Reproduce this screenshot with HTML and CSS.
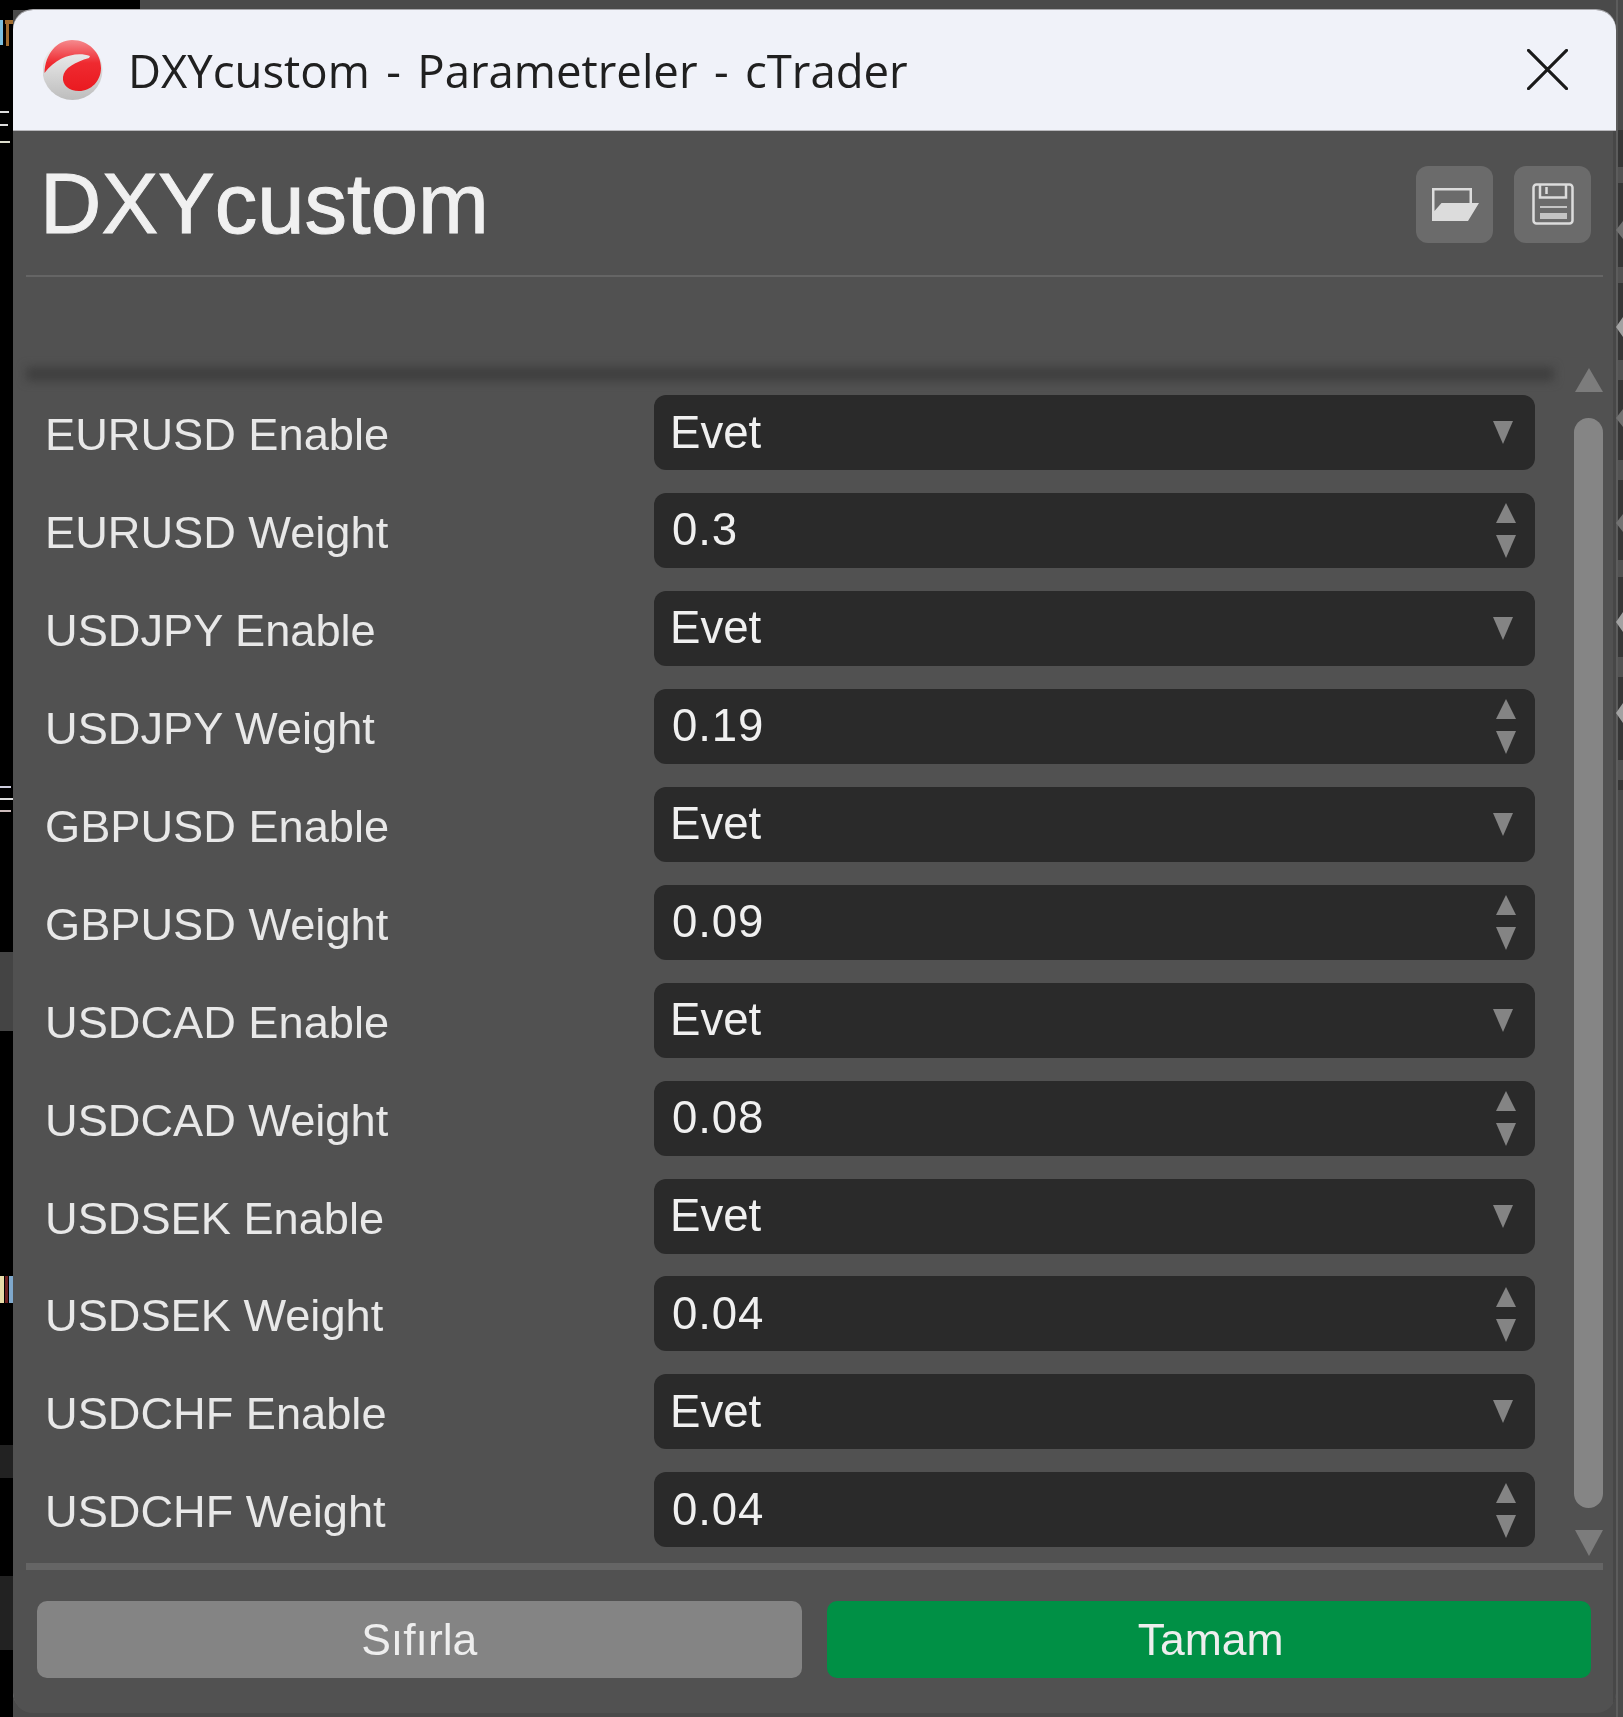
FILE: index.html
```html
<!DOCTYPE html>
<html lang="tr">
<head>
<meta charset="utf-8">
<title>DXYcustom - Parametreler - cTrader</title>
<link rel="stylesheet" href="styles.css">
</head>
<body>
<div class="desktop">
  <svg class="strip strip-left" width="13" height="1717" viewBox="0 0 13 1717" aria-hidden="true">
    <rect x="0" y="952" width="13" height="79" fill="#444"/>
    <rect x="0" y="1445" width="13" height="33" fill="#222"/>
    <rect x="0" y="1576" width="13" height="74" fill="#222"/>
    <rect x="0" y="20" width="3" height="25" fill="#7cc0e0"/>
    <path d="M5 20h8v4H9v22H6V24H5Z" fill="#a06c30"/>
    <rect x="0" y="111" width="9" height="2" fill="#ddd"/>
    <rect x="0" y="124" width="8" height="2" fill="#ddd"/>
    <rect x="0" y="141" width="10" height="2" fill="#ddc"/>
    <rect x="0" y="786" width="11" height="2" fill="#ccd"/>
    <rect x="0" y="798" width="13" height="2" fill="#ddd"/>
    <rect x="0" y="810" width="11" height="2" fill="#cbb"/>
    <rect x="0" y="1276" width="4" height="27" fill="#e8dca8"/>
    <rect x="5" y="1276" width="3" height="27" fill="#6c2020"/>
    <rect x="9" y="1276" width="4" height="27" fill="#7fa8cc"/>
  </svg>
  <svg class="strip strip-right" width="7" height="665" viewBox="0 0 7 665" aria-hidden="true">
    <rect x="2" y="5" width="5" height="660" fill="#363636"/>
    <path d="M2 42h5v16H2ZM2 142h5v16H2ZM2 235h5v20H2ZM2 335h5v20H2ZM2 435h5v17H2ZM2 532h5v20H2ZM2 635h5v20H2Z" fill="#525252"/>
    <path d="M0 105l7-9v18ZM0 398l7-9v18ZM0 293l7-9v18Z" fill="#727272"/>
    <path d="M0 202l7-10v20ZM0 497l7-10v20ZM0 588l7-10v20Z" fill="#a2a2a2"/>
  </svg>
  <main class="window">
    <header class="titlebar">
      <svg class="app-logo" viewBox="0 0 60 62" aria-hidden="true">
        <defs>
          <linearGradient id="lg-g" x1="0" y1="0" x2="0" y2="1"><stop offset="0" stop-color="#f6f6f6"/><stop offset="1" stop-color="#bdbdbd"/></linearGradient>
          <linearGradient id="lg-r" x1="0" y1="0" x2="0" y2="1"><stop offset="0" stop-color="#f58a8e"/><stop offset="0.45" stop-color="#ef2a30"/><stop offset="1" stop-color="#ea1a20"/></linearGradient>
        </defs>
        <circle cx="29.500" cy="31" r="30" fill="url(#lg-g)"/>
        <path d="M1.500 34C2 15 14 1 29 1c17 0 29 13 29 28 0 13-10 23-22 23-10 0-17-6-16-14 1-9 12-15 26-19l1-2C34 12 14 17 1.500 34Z" fill="url(#lg-r)"/>
      </svg>
      <span class="title-text">DXYcustom - Parametreler - cTrader</span>
      <svg class="close-x" viewBox="0 0 42 42" aria-hidden="true"><path d="M1.500 1.500l39 39M40.500 1.500l-39 39"/></svg>
    </header>
    <section class="body">
      <div class="heading-row">
        <h1 class="heading">DXYcustom</h1>
        <div class="tools">
          <button class="tool" aria-label="Aç">
            <svg class="ic-folder" viewBox="0 0 47 33" width="47" height="33" aria-hidden="true"><path class="ic-fill" d="M0 0h40v15h-2.500V2.500h-35V23l7-8h37.500L36 33H0Z"/></svg>
          </button>
          <button class="tool" aria-label="Kaydet">
            <svg viewBox="0 0 42 42" width="42" height="42" aria-hidden="true"><rect class="ic-line" x="1.500" y="1.500" width="39" height="39" rx="3"/><path class="ic-line" d="M8 2v12.500h26V2"/><path class="ic-line" d="M14.500 4v7"/><path class="ic-bar" d="M8 23h27v2H8zM8 30h27v6H8z"/></svg>
          </button>
        </div>
      </div>
      <div class="spacer"></div>
      <div class="scroll-wrap">
        <div class="rows">
          <div class="shadow"></div>
          <div class="row"><span class="label">EURUSD Enable</span><div class="field"><span class="val">Evet</span><i class="tri down one"></i></div></div>
          <div class="row"><span class="label">EURUSD Weight</span><div class="field"><span class="val num">0.3</span><span class="spin"><i class="tri up"></i><i class="tri down"></i></span></div></div>
          <div class="row"><span class="label">USDJPY Enable</span><div class="field"><span class="val">Evet</span><i class="tri down one"></i></div></div>
          <div class="row"><span class="label">USDJPY Weight</span><div class="field"><span class="val num">0.19</span><span class="spin"><i class="tri up"></i><i class="tri down"></i></span></div></div>
          <div class="row"><span class="label">GBPUSD Enable</span><div class="field"><span class="val">Evet</span><i class="tri down one"></i></div></div>
          <div class="row"><span class="label">GBPUSD Weight</span><div class="field"><span class="val num">0.09</span><span class="spin"><i class="tri up"></i><i class="tri down"></i></span></div></div>
          <div class="row"><span class="label">USDCAD Enable</span><div class="field"><span class="val">Evet</span><i class="tri down one"></i></div></div>
          <div class="row"><span class="label">USDCAD Weight</span><div class="field"><span class="val num">0.08</span><span class="spin"><i class="tri up"></i><i class="tri down"></i></span></div></div>
          <div class="row"><span class="label">USDSEK Enable</span><div class="field"><span class="val">Evet</span><i class="tri down one"></i></div></div>
          <div class="row"><span class="label">USDSEK Weight</span><div class="field"><span class="val num">0.04</span><span class="spin"><i class="tri up"></i><i class="tri down"></i></span></div></div>
          <div class="row"><span class="label">USDCHF Enable</span><div class="field"><span class="val">Evet</span><i class="tri down one"></i></div></div>
          <div class="row"><span class="label">USDCHF Weight</span><div class="field"><span class="val num">0.04</span><span class="spin"><i class="tri up"></i><i class="tri down"></i></span></div></div>
        </div>
        <div class="scrollbar">
          <i class="sb-arrow sb-up"></i>
          <div class="sb-thumb"></div>
          <i class="sb-arrow sb-down"></i>
        </div>
      </div>
      <div class="footer">
        <button class="btn reset">Sıfırla</button>
        <button class="btn ok">Tamam</button>
      </div>
    </section>
  </main>
</div>
</body>
</html>
```
FILE: styles.css
```css
* { box-sizing: border-box; }
html, body { margin: 0; padding: 0; }
body { width: 1623px; height: 1717px; overflow: hidden; background: #000; font-family: "Liberation Sans", Arial, sans-serif; }
.desktop {
  position: relative; width: 1623px; height: 1717px; padding: 10px 7px 4px 13px;
  background:
    linear-gradient(90deg, #000 0 140px, transparent 140px) 0 0 / 100% 10px no-repeat,
    linear-gradient(90deg, #000 0 13px, #4a4a4a 13px 1616px, #5c5c5c 1616px 1618px, #4a4a4a 1618px);
  filter: blur(0.55px);
}
.strip { position: absolute; display: block; }
.strip-left { left: 0; top: 0; }
.strip-right { left: 1616px; top: 125px; }
.window { position: relative; display: flex; flex-direction: column; height: 1703px; border-radius: 20px; overflow: hidden; background: #515151; box-shadow: 0 -1px 0 #a8a8ac; }
.titlebar { display: flex; align-items: center; height: 121px; padding: 0 48px 0 30px; background: #f0f2f9; border-bottom: 1px solid #b8b8bc; flex: none; }
.app-logo { width: 60px; height: 62px; flex: none; }
.title-text { margin-left: 25px; flex: 1; font-family: "Open Sans", sans-serif; font-size: 45.5px; word-spacing: 4.6px; color: #202020; white-space: nowrap; }
.close-x { width: 41px; height: 41px; flex: none; margin-top: -2px; }
.close-x path { stroke: #1a1a1a; stroke-width: 3.2; fill: none; stroke-linecap: round; }
.body { flex: 1; display: flex; flex-direction: column; padding: 0 10px 0 13px; border-right: 3px solid #474747; color: #e6e6e6; min-height: 0; }
.heading-row { display: flex; align-items: center; justify-content: space-between; height: 146px; padding: 0 12px 0 14px; border-bottom: 2px solid #656565; flex: none; }
.heading { margin: 0; font-size: 85px; font-weight: 400; color: #f0f0f0; line-height: 1; -webkit-text-stroke: 1px #f0f0f0; }
.tools { display: flex; gap: 21px; padding-top: 2px; }
.tool { width: 77px; height: 77px; border: 0; border-radius: 12px; background: #6b6b6b; display: flex; align-items: center; justify-content: center; padding: 0; }
.ic-folder { margin-left: 2px; }
.ic-fill { fill: #dcdcdc; }
.ic-line { fill: none; stroke: #dcdcdc; stroke-width: 2.5; }
.ic-bar { fill: #c4c4c4; }
.spacer { height: 91px; flex: none; }
.scroll-wrap { display: flex; flex: none; height: 1195px; position: relative; }
.rows { flex: 1; position: relative; padding: 27px 39px 0 0; }
.shadow { position: absolute; left: 0; right: 20px; top: -1px; height: 14px; background: #3f3f3f; filter: blur(5px); }
.row { display: flex; height: 97.95px; padding-left: 19px; position: relative; }
.label { width: 609px; flex: none; height: 75px; line-height: 75px; font-size: 45.2px; color: #e8e8e8; padding-top: 2px; white-space: nowrap; }
.field { flex: 1; height: 75px; background: #2a2a2a; border-radius: 12px; display: flex; align-items: center; justify-content: space-between; padding: 0 19px 0 16px; }
.val { font-size: 45.6px; color: #f0f0f0; }
.num { margin-left: 2px; letter-spacing: 0.9px; }
.tri { display: block; width: 0; height: 0; border-left: 10.5px solid transparent; border-right: 10.5px solid transparent; }
.tri.down { border-top: 23px solid #848484; }
.tri.up { border-bottom: 20px solid #848484; }
.tri.one { margin-right: 3px; }
.spin { display: flex; flex-direction: column; gap: 12px; padding-top: 1px; }
.scrollbar { width: 29px; flex: none; display: flex; flex-direction: column; align-items: center; padding-bottom: 7px; }
.sb-arrow { display: block; width: 0; height: 0; border-left: 14.5px solid transparent; border-right: 14.5px solid transparent; flex: none; }
.sb-up { border-bottom: 24px solid #7c7c7c; }
.sb-down { border-top: 26px solid #7c7c7c; }
.sb-thumb { width: 29px; flex: 1; margin: 26px 0 22px; background: #858585; border-radius: 15px; }
.footer { display: flex; gap: 25px; padding: 31px 12px 0 11px; border-top: 7px solid #656565; flex: none; height: 150px; }
.btn { flex: 1; height: 77px; border: 0; border-radius: 10px; font-family: "Liberation Sans", Arial, sans-serif; font-size: 44.5px; color: #eeeeee; padding: 0; }
.reset { background: #848484; }
.ok { background: #009045; text-indent: 4px; }
```
